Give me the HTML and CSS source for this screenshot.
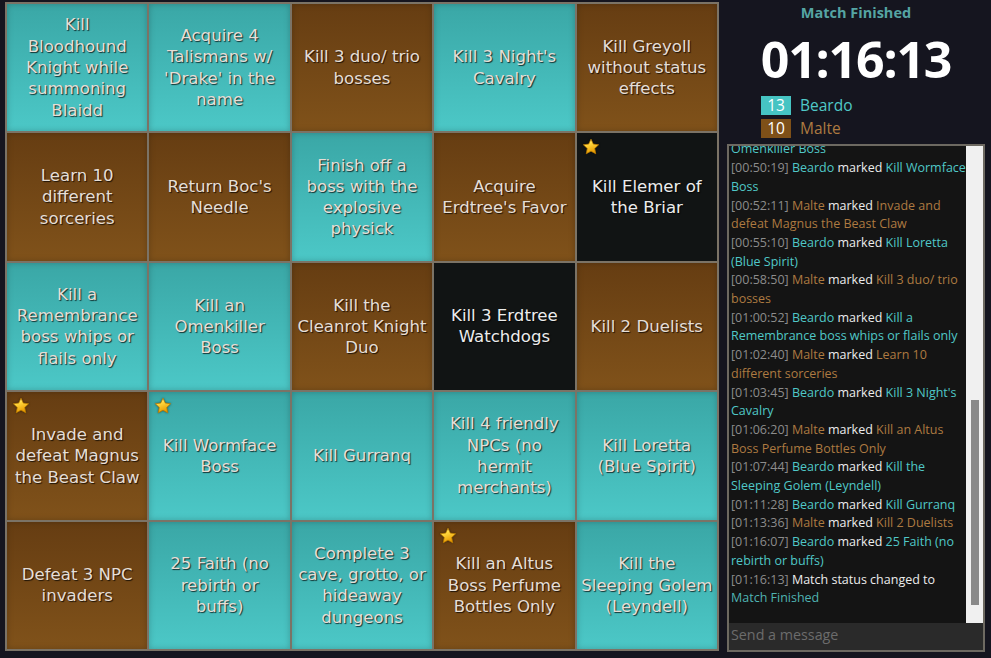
FILE: index.html
```html
<!DOCTYPE html>
<html>
<head>
<meta charset="utf-8">
<link rel="stylesheet" href="styles.css">
</head>
<body>
<div class="board">
  <div class="cell teal"><span>Kill<br>Bloodhound<br>Knight while<br>summoning<br>Blaidd</span></div>
  <div class="cell teal"><span>Acquire 4<br>Talismans w/<br>'Drake' in the<br>name</span></div>
  <div class="cell brown"><span>Kill 3 duo/ trio<br>bosses</span></div>
  <div class="cell teal"><span>Kill 3 Night's<br>Cavalry</span></div>
  <div class="cell brown"><span>Kill Greyoll<br>without status<br>effects</span></div>

  <div class="cell brown"><span>Learn 10<br>different<br>sorceries</span></div>
  <div class="cell brown"><span>Return Boc's<br>Needle</span></div>
  <div class="cell teal"><span>Finish off a<br>boss with the<br>explosive<br>physick</span></div>
  <div class="cell brown"><span>Acquire<br>Erdtree's Favor</span></div>
  <div class="cell black"><svg class="star" viewBox="0 0 24 24"><use href="#star"/></svg><span>Kill Elemer of<br>the Briar</span></div>

  <div class="cell teal"><span>Kill a<br>Remembrance<br>boss whips or<br>flails only</span></div>
  <div class="cell teal"><span>Kill an<br>Omenkiller<br>Boss</span></div>
  <div class="cell brown"><span>Kill the<br>Cleanrot Knight<br>Duo</span></div>
  <div class="cell black"><span>Kill 3 Erdtree<br>Watchdogs</span></div>
  <div class="cell brown"><span>Kill 2 Duelists</span></div>

  <div class="cell brown"><svg class="star" viewBox="0 0 24 24"><use href="#star"/></svg><span>Invade and<br>defeat Magnus<br>the Beast Claw</span></div>
  <div class="cell teal"><svg class="star" viewBox="0 0 24 24"><use href="#star"/></svg><span>Kill Wormface<br>Boss</span></div>
  <div class="cell teal"><span>Kill Gurranq</span></div>
  <div class="cell teal"><span>Kill 4 friendly<br>NPCs (no<br>hermit<br>merchants)</span></div>
  <div class="cell teal"><span>Kill Loretta<br>(Blue Spirit)</span></div>

  <div class="cell brown"><span>Defeat 3 NPC<br>invaders</span></div>
  <div class="cell teal"><span>25 Faith (no<br>rebirth or<br>buffs)</span></div>
  <div class="cell teal"><span>Complete 3<br>cave, grotto, or<br>hideaway<br>dungeons</span></div>
  <div class="cell brown"><svg class="star" viewBox="0 0 24 24"><use href="#star"/></svg><span>Kill an Altus<br>Boss Perfume<br>Bottles Only</span></div>
  <div class="cell teal"><span>Kill the<br>Sleeping Golem<br>(Leyndell)</span></div>
</div>

<div class="panel">
  <div class="status">Match Finished</div>
  <div class="timer">01:16:13</div>
  <div class="scores">
    <div class="score"><span class="count c-teal">13</span><span class="name t-teal">Beardo</span></div>
    <div class="score"><span class="count c-brown">10</span><span class="name t-brown">Malte</span></div>
  </div>
  <div class="chat">
    <div class="chat-body">
      <div class="log">
        <div class="msg"><span class="t-teal">Omenkiller Boss</span></div>
        <div class="msg"><span class="ts">[00:50:19]</span> <span class="t-teal">Beardo</span> marked <span class="t-teal">Kill Wormface</span><br><span class="t-teal">Boss</span></div>
        <div class="msg"><span class="ts">[00:52:11]</span> <span class="t-brown">Malte</span> marked <span class="t-brown">Invade and</span><br><span class="t-brown">defeat Magnus the Beast Claw</span></div>
        <div class="msg"><span class="ts">[00:55:10]</span> <span class="t-teal">Beardo</span> marked <span class="t-teal">Kill Loretta</span><br><span class="t-teal">(Blue Spirit)</span></div>
        <div class="msg"><span class="ts">[00:58:50]</span> <span class="t-brown">Malte</span> marked <span class="t-brown">Kill 3 duo/ trio</span><br><span class="t-brown">bosses</span></div>
        <div class="msg"><span class="ts">[01:00:52]</span> <span class="t-teal">Beardo</span> marked <span class="t-teal">Kill a</span><br><span class="t-teal">Remembrance boss whips or flails only</span></div>
        <div class="msg"><span class="ts">[01:02:40]</span> <span class="t-brown">Malte</span> marked <span class="t-brown">Learn 10</span><br><span class="t-brown">different sorceries</span></div>
        <div class="msg"><span class="ts">[01:03:45]</span> <span class="t-teal">Beardo</span> marked <span class="t-teal">Kill 3 Night's</span><br><span class="t-teal">Cavalry</span></div>
        <div class="msg"><span class="ts">[01:06:20]</span> <span class="t-brown">Malte</span> marked <span class="t-brown">Kill an Altus</span><br><span class="t-brown">Boss Perfume Bottles Only</span></div>
        <div class="msg"><span class="ts">[01:07:44]</span> <span class="t-teal">Beardo</span> marked <span class="t-teal">Kill the</span><br><span class="t-teal">Sleeping Golem (Leyndell)</span></div>
        <div class="msg"><span class="ts">[01:11:28]</span> <span class="t-teal">Beardo</span> marked <span class="t-teal">Kill Gurranq</span></div>
        <div class="msg"><span class="ts">[01:13:36]</span> <span class="t-brown">Malte</span> marked <span class="t-brown">Kill 2 Duelists</span></div>
        <div class="msg"><span class="ts">[01:16:07]</span> <span class="t-teal">Beardo</span> marked <span class="t-teal">25 Faith (no</span><br><span class="t-teal">rebirth or buffs)</span></div>
        <div class="msg"><span class="ts">[01:16:13]</span> Match status changed to<br><span class="t-status">Match Finished</span></div>
      </div>
      <div class="scrollbar"><div class="thumb"></div></div>
    </div>
    <div class="input">Send a message</div>
  </div>
</div>

<svg class="defs" width="0" height="0">
  <defs>
    <linearGradient id="starfill" x1="0" y1="0" x2="0.4" y2="1">
      <stop offset="0" stop-color="#fff6a0"/>
      <stop offset="0.45" stop-color="#ffd43a"/>
      <stop offset="1" stop-color="#e89a00"/>
    </linearGradient>
    <path id="star" d="M12 1.6l3.05 6.55 7.15.85-5.25 4.95 1.4 7.1L12 17.55l-6.35 3.5 1.4-7.1L1.8 9l7.15-.85z" fill="url(#starfill)" stroke="#b87a00" stroke-width="1" stroke-linejoin="round"/>
  </defs>
</svg>
</body>
</html>
```

FILE: styles.css
```css
* { box-sizing: border-box; }

html, body {
  margin: 0;
  height: 658px;
  overflow: hidden;
}

body {
  background: #15151f;
  display: flex;
  align-items: flex-start;
  padding: 2px 0 0 5px;
  font-family: "Open Sans", "Noto Sans", sans-serif;
}

.board {
  width: 714px;
  height: 649px;
  display: grid;
  grid-template-columns: repeat(5, 1fr);
  grid-template-rows: repeat(5, 1fr);
  border: 1px solid #7b7366;
  flex-shrink: 0;
}

.cell {
  position: relative;
  border: 1px solid #7b7366;
  display: flex;
  align-items: center;
  justify-content: center;
  text-align: center;
  font-family: "DejaVu Sans", sans-serif;
  font-size: 16.6px;
  line-height: 21.3px;
  color: #e6ded6;
  white-space: nowrap;
  text-shadow: 1px 1px 1px rgba(0, 0, 0, 0.75);
}

.teal {
  background: linear-gradient(#3aa7a6, #4cc8c7);
  box-shadow: inset 0 0 6px rgba(0, 0, 0, 0.22);
}

.brown {
  background: linear-gradient(#663d12, #80521a);
  box-shadow: inset 0 0 6px rgba(0, 0, 0, 0.22);
}

.black {
  background: #111414;
  color: #ececec;
}

.star {
  position: absolute;
  top: 5px;
  left: 5px;
  width: 18px;
  height: 18px;
  filter: drop-shadow(0 0 1px rgba(0, 0, 0, 0.5));
}

.defs { position: absolute; }

.panel {
  width: 258px;
  margin-left: 8px;
  display: flex;
  flex-direction: column;
  flex-shrink: 0;
}

.status {
  text-align: center;
  font-weight: 700;
  font-size: 14.5px;
  line-height: 22px;
  color: #55a4a3;
}

.timer {
  margin-top: 1px;
  text-align: center;
  font-weight: 700;
  font-size: 50px;
  line-height: 68px;
  letter-spacing: -1.2px;
  color: #ffffff;
}

.scores {
  margin-top: 3px;
  padding-left: 34px;
  display: flex;
  flex-direction: column;
  gap: 4px;
}

.score {
  display: flex;
  align-items: center;
  height: 19px;
}

.count {
  width: 30px;
  height: 19px;
  display: flex;
  align-items: center;
  justify-content: center;
  color: #ffffff;
  font-size: 15.5px;
  line-height: 19px;
}

.c-teal { background: #46c4c3; }
.c-brown { background: #7e5018; }

.name {
  margin-left: 9px;
  font-size: 15.5px;
  line-height: 19px;
}

.t-teal { color: #50c8c7; }
.t-brown { color: #ad7a41; }
.t-status { color: #4fb3b2; }

.chat {
  margin-top: 6px;
  height: 508px;
  border: 2px solid #6d6961;
  display: flex;
  flex-direction: column;
  background: #141414;
}

.chat-body {
  flex: 1;
  display: flex;
  min-height: 0;
}

.log {
  flex: 1;
  display: flex;
  flex-direction: column;
  justify-content: flex-end;
  overflow: hidden;
  padding: 0 2px 15px 2px;
  font-size: 12.5px;
  line-height: 18.7px;
  color: #ececec;
  white-space: nowrap;
}

.ts { color: #8c8c8c; }

.scrollbar {
  width: 17px;
  background: #f0f0f0;
  padding-top: 254px;
  display: flex;
  justify-content: center;
}

.thumb {
  width: 8px;
  height: 205px;
  background: #898989;
}

.input {
  height: 27px;
  background: #2a2a2a;
  color: #6c6c6c;
  font-size: 14.3px;
  line-height: 24px;
  padding-left: 2px;
}
```
